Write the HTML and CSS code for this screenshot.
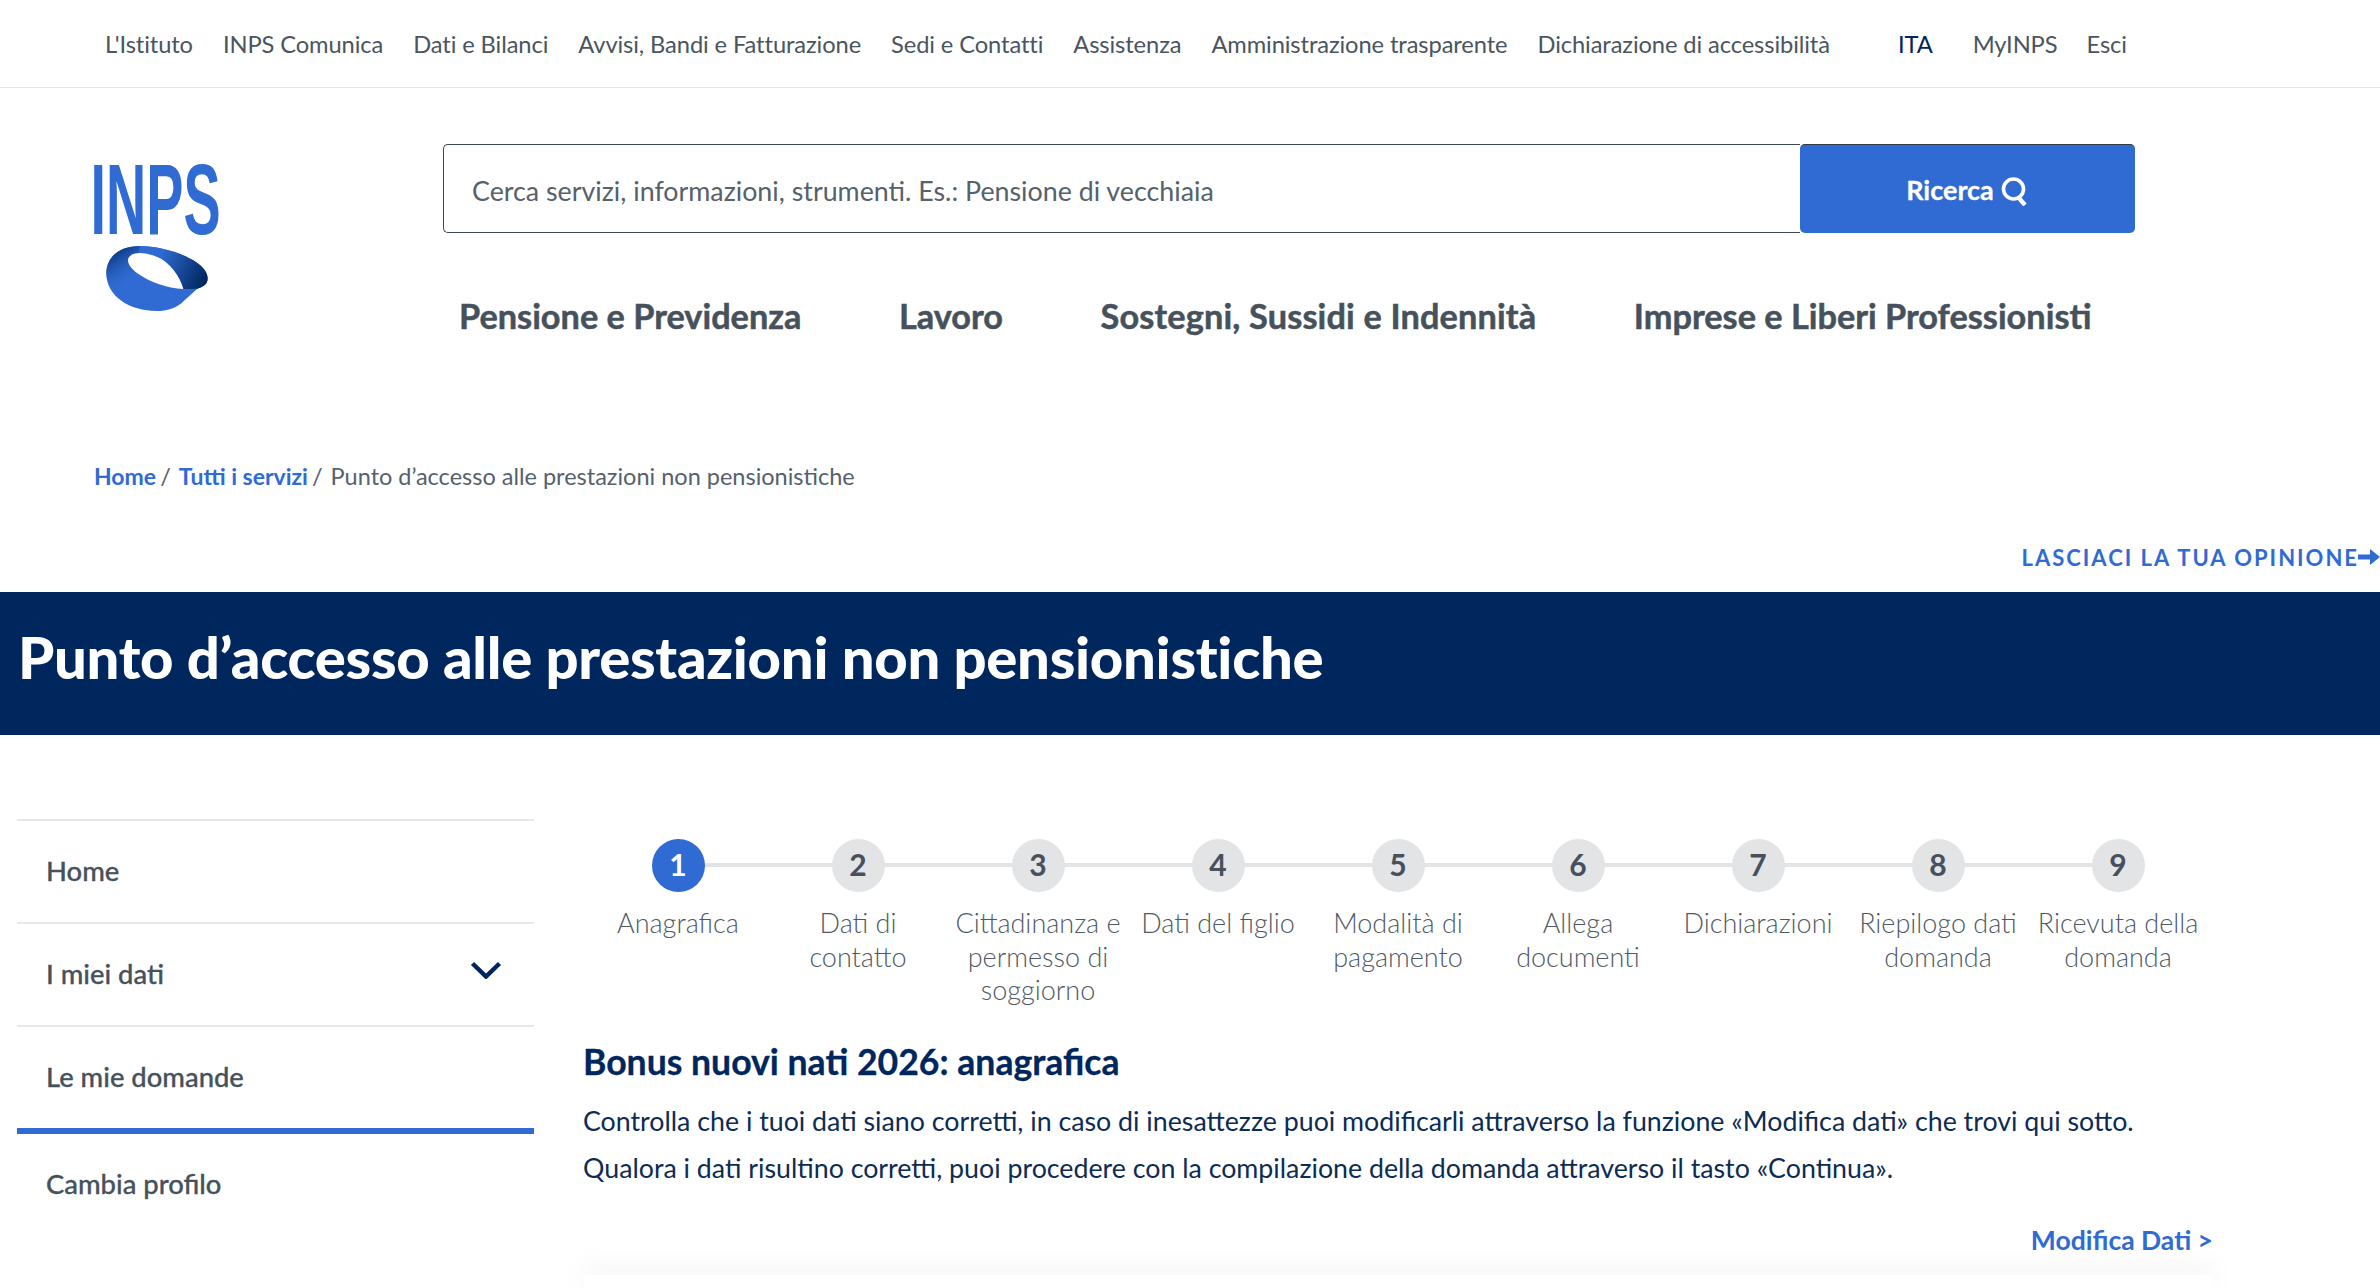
FILE: index.html
```html
<!DOCTYPE html>
<html lang="it">
<head>
    <meta charset="UTF-8">
    <title>Punto d'accesso alle prestazioni non pensionistiche - INPS</title>
    <link rel="stylesheet" href="styles.css">
</head>
<body>
    <div class="topbar">
        <nav class="top-links">
            <a>L'Istituto</a>
            <a>INPS Comunica</a>
            <a>Dati e Bilanci</a>
            <a>Avvisi, Bandi e Fatturazione</a>
            <a>Sedi e Contatti</a>
            <a>Assistenza</a>
            <a>Amministrazione trasparente</a>
            <a>Dichiarazione di accessibilità</a>
        </nav>
        <div class="top-user">
            <a class="lang">ITA</a>
            <a>MyINPS</a>
            <a>Esci</a>
        </div>
    </div>

    <header class="header">
        <svg class="logo" viewBox="-3 0 250 173" aria-label="INPS">
            <defs>
                <linearGradient id="ring-right" x1="250" y1="350" x2="440" y2="440" gradientUnits="userSpaceOnUse">
                    <stop offset="0.2" stop-color="#306bd3"/>
                    <stop offset="0.95" stop-color="#00265e"/>
                </linearGradient>
                <linearGradient id="ring-left" x1="170" y1="335" x2="225" y2="420" gradientUnits="userSpaceOnUse">
                    <stop offset="0" stop-color="#0d3a85"/>
                    <stop offset="1" stop-color="#306bd3" stop-opacity="0"/>
                </linearGradient>
            </defs>
            <text class="logo-text" x="-2.400" y="94" textLength="130" lengthAdjust="spacingAndGlyphs">INPS</text>
            <g transform="translate(-33 0) scale(0.33333)">
                <path fill="#306bd3" d="M139 400C139 350 180 318 240 318C320 318 443 362 443 415C443 435 428 441 412 446L372 482C350 505 320 513 290 513C210 513 139 470 139 400Z"/>
                <path fill="url(#ring-right)" d="M240 318C320 318 443 362 443 415C443 435 428 441 412 446C398 447 384 447 370 447C360 410 330 365 290 350C270 342 250 338 235 340Z"/>
                <path fill="url(#ring-left)" d="M139 400C139 350 180 318 240 318L235 340C215 340 200 350 205 365C210 385 225 395 240 405L190 470C160 450 139 430 139 400Z"/>
                <path fill="#fff" d="M205 355C215 335 250 335 290 350C330 365 360 410 370 447C320 445 270 425 240 405C215 390 200 370 205 355Z"/>
            </g>
        </svg>
        <div class="header-main">
            <form class="search">
                <div class="search-input">Cerca servizi, informazioni, strumenti. Es.: Pensione di vecchiaia</div>
                <button class="search-btn" type="button">
                    Ricerca
                    <svg class="search-icon" viewBox="0 0 28 30">
                        <circle cx="12.5" cy="13" r="10" fill="none" stroke="#fff" stroke-width="3.6"/>
                        <path d="M17 21l7 8" stroke="#fff" stroke-width="4.4" fill="none"/>
                    </svg>
                </button>
            </form>
            <nav class="main-nav">
                <a>Pensione e Previdenza</a>
                <a>Lavoro</a>
                <a>Sostegni, Sussidi e Indennità</a>
                <a>Imprese e Liberi Professionisti</a>
            </nav>
        </div>
    </header>

    <div class="breadcrumb">
        <a>Home</a><span class="sep">/</span><a>Tutti i servizi</a><span class="sep">/</span><span class="current">Punto d’accesso alle prestazioni non pensionistiche</span>
    </div>

    <div class="opinion">
        <a>LASCIACI LA TUA OPINIONE</a>
        <svg class="opinion-arrow" viewBox="0 0 22 18"><path d="M0 6.5h12V1l10 8-10 8v-5.500H0z" fill="#306bd3"/></svg>
    </div>

    <div class="banner">
        <h1>Punto d’accesso alle prestazioni non pensionistiche</h1>
    </div>

    <div class="layout">
        <aside class="sidebar">
            <a class="side-item">Home</a>
            <a class="side-item">
                I miei dati
                <svg class="chevron" viewBox="0 0 32 18"><path d="M2.500 2.500L16 15.500 29.500 2.500" fill="none" stroke="#00265e" stroke-width="4.500"/></svg>
            </a>
            <a class="side-item active">Le mie domande</a>
            <a class="side-item last">Cambia profilo</a>
        </aside>

        <main class="content">
            <ol class="stepper">
                <li class="step current"><span class="step-num">1</span><span class="step-label">Anagrafica</span></li>
                <li class="step"><span class="step-num">2</span><span class="step-label">Dati di contatto</span></li>
                <li class="step"><span class="step-num">3</span><span class="step-label">Cittadinanza e permesso di soggiorno</span></li>
                <li class="step"><span class="step-num">4</span><span class="step-label">Dati del figlio</span></li>
                <li class="step"><span class="step-num">5</span><span class="step-label">Modalità di pagamento</span></li>
                <li class="step"><span class="step-num">6</span><span class="step-label">Allega documenti</span></li>
                <li class="step"><span class="step-num">7</span><span class="step-label">Dichiarazioni</span></li>
                <li class="step"><span class="step-num">8</span><span class="step-label">Riepilogo dati domanda</span></li>
                <li class="step"><span class="step-num">9</span><span class="step-label">Ricevuta della domanda</span></li>
            </ol>

            <h2 class="section-title">Bonus nuovi nati 2026: anagrafica</h2>
            <p class="intro">Controlla che i tuoi dati siano corretti, in caso di inesattezze puoi modificarli attraverso la funzione «Modifica dati» che trovi qui sotto.</p>
            <p class="intro">Qualora i dati risultino corretti, puoi procedere con la compilazione della domanda attraverso il tasto «Continua».</p>

            <div class="edit-row"><a>Modifica Dati &gt;</a></div>
            <div class="card"></div>
        </main>
    </div>
</body>
</html>
```

FILE: styles.css
```css
html, body {
    height: 100%;
    overflow: hidden;
}

body {
    margin: 0;
    background: #fff;
    font-family: Lato, "Open Sans", sans-serif;
    color: #46515c;
}

.topbar {
    display: flex;
    align-items: center;
    height: 87px;
    padding-left: 105px;
    border-bottom: 1px solid #e3e6e8;
    font-size: 23.700px;
    letter-spacing: -0.1px;
    color: #4a5560;
}

.top-links {
    display: flex;
    gap: 30px;
    padding-top: 1px;
}

.top-user {
    display: flex;
    gap: 29px;
    margin-left: 68px;
}

.top-user .lang {
    color: #00265e;
    margin-right: 11px;
}

.header {
    display: flex;
    height: 360px;
    padding: 56px 245px 0 90px;
    box-sizing: border-box;
}

.logo {
    width: 250px;
    height: 173px;
    margin: -4px -119px 0 0;
    flex: none;
}

.logo-text {
    font-family: "Liberation Sans", sans-serif;
    font-weight: 700;
    font-size: 99.400px;
    fill: #306bd3;
}

.header-main {
    margin-left: 222px;
    flex: 1;
}

.search {
    display: flex;
    height: 89px;
}

.search-input {
    flex: 1;
    display: flex;
    align-items: center;
    padding: 4px 0 0 28px;
    border: 1px solid #3c4650;
    border-right: none;
    border-radius: 5px 0 0 5px;
    font-size: 26.800px;
    color: #56616c;
}

.search-btn {
    width: 335px;
    border: none;
    border-top: 1px solid #2c3a4a;
    border-radius: 5px;
    background: #306bd3;
    color: #fff;
    font-family: inherit;
    font-size: 27px;
    font-weight: 700;
    -webkit-text-stroke: 0.3px #fff;
    display: flex;
    align-items: center;
    justify-content: center;
    gap: 7px;
}

.search-icon {
    width: 28px;
    height: 30px;
    margin-top: 3px;
}

.main-nav {
    display: flex;
    gap: 97.500px;
    margin: 62px 0 0 16px;
    font-size: 34.300px;
    font-weight: 700;
    -webkit-text-stroke: 0.5px #46515c;
    color: #46515c;
}

.main-nav a:nth-child(3) {
    letter-spacing: 0.15px;
}

.breadcrumb {
    padding-left: 94px;
    height: 36px;
    line-height: 36px;
    margin-top: 10px;
    font-size: 23.500px;
    color: #56616c;
}

.breadcrumb a {
    color: #306bd3;
    font-size: 23px;
    font-weight: 700;
}

.sep {
    margin: 0 8px 0 4px;
}

.opinion {
    display: flex;
    justify-content: flex-end;
    align-items: center;
    height: 36px;
    margin-top: 45px;
    margin-bottom: 17px;
    font-size: 22px;
    font-weight: 700;
    letter-spacing: 2px;
    color: #306bd3;
}

.opinion-arrow {
    width: 22px;
    height: 18px;
    margin-left: -1px;
}

.banner {
    height: 143px;
    box-sizing: border-box;
    padding: 0 0 15px 18px;
    background: #00265e;
    display: flex;
    align-items: center;
}

.banner h1 {
    margin: 0;
    color: #fff;
    font-size: 58px;
    font-weight: 900;
    letter-spacing: -0.3px;
}

.layout {
    display: flex;
    gap: 50px;
    padding: 84px 0 0 17px;
}

.sidebar {
    width: 517px;
    flex: none;
    border-top: 2px solid #e6e9ec;
}

.side-item {
    display: flex;
    align-items: center;
    justify-content: space-between;
    height: 98px;
    padding: 0 32px 3px 29px;
    border-bottom: 2px solid #e6e9ec;
    font-size: 27.400px;
    font-weight: 500;
    -webkit-text-stroke: 0.3px #46515c;
    color: #46515c;
}

.side-item.active {
    border-bottom: 6px solid #306bd3;
}

.side-item.last {
    border-bottom: none;
}

.chevron {
    width: 32px;
    height: 18px;
    margin-top: -7px;
}

.content {
    width: 1629px;
    flex: none;
}

.stepper {
    list-style: none;
    display: grid;
    grid-template-columns: repeat(9, 180px);
    margin: 0;
    padding: 0 0 0 4px;
}

.step {
    position: relative;
    display: flex;
    flex-direction: column;
    align-items: center;
    text-align: center;
    min-height: 200px;
    padding-top: 20px;
}

.step:not(:last-child)::after {
    content: "";
    position: absolute;
    top: 44px;
    left: 50%;
    width: 100%;
    height: 4px;
    background: #e3e4e6;
}

.step-num {
    position: relative;
    z-index: 1;
    width: 53px;
    height: 53px;
    border-radius: 50%;
    background: #e3e4e6;
    color: #46515c;
    font-size: 30px;
    font-weight: 700;
    line-height: 51px;
}

.step.current .step-num {
    background: #306bd3;
    color: #fff;
}

.step-label {
    margin-top: 14px;
    padding: 0 6px;
    font-size: 27px;
    line-height: 33.500px;
    font-weight: 300;
    color: #4f5a65;
}

.section-title {
    margin: 0 0 13px -1px;
    font-size: 35.600px;
    line-height: 46px;
    font-weight: 700;
    -webkit-text-stroke: 0.3px #00265e;
    color: #00265e;
}

.intro {
    margin: 0 0 0 -1px;
    font-size: 26.760px;
    line-height: 47px;
    color: #0d2c54;
}

.edit-row {
    text-align: right;
    margin-top: 29px;
    font-size: 26.500px;
    line-height: 38px;
    font-weight: 700;
    color: #306bd3;
}

.card {
    height: 14px;
    margin-top: 16px;
    background: #fff;
    box-shadow: 0 -6px 30px rgba(0, 0, 0, 0.07);
}
```
